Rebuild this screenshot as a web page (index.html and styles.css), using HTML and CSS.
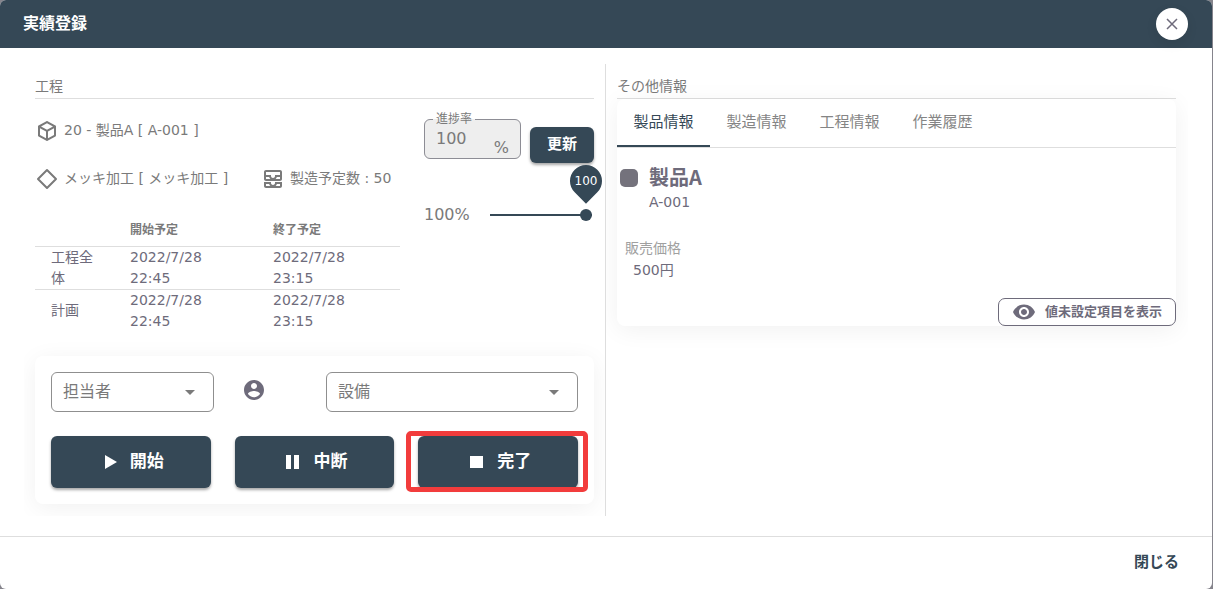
FILE: index.html
```html
<!DOCTYPE html>
<html lang="ja">
<head>
<meta charset="utf-8">
<meta name="viewport" content="width=device-width, initial-scale=1">
<title>実績登録</title>
<link rel="stylesheet" href="styles.css">
</head>
<body>
<div class="dialog" role="dialog" aria-labelledby="dialog-title">
  <header class="dialog-header">
    <h1 class="dialog-title" id="dialog-title">実績登録</h1>
    <button class="close-button" type="button" aria-label="閉じる">
      <svg width="16" height="16" viewBox="0 0 16 16" fill="none" stroke="currentColor" stroke-width="1.500"><path d="M3 3l10 10M13 3L3 13"/></svg>
    </button>
  </header>

  <main class="dialog-body">
    <section class="column column-process">
      <h2 class="section-title">工程</h2>
      <div class="process">
        <div class="process-info">
          <div class="info-row">
            <div class="info-item">
              <svg class="icon" viewBox="0 0 24 24"><path d="M21 16.500c0 .380-.210.710-.530.880l-7.900 4.440c-.160.120-.360.180-.570.180s-.410-.060-.570-.180l-7.900-4.440A.991.991 0 0 1 3 16.500v-9c0-.380.210-.710.530-.880l7.900-4.440c.160-.120.360-.180.570-.180s.410.060.570.180l7.900 4.440c.320.170.530.500.530.880v9M12 4.150 6.040 7.500 12 10.850l5.960-3.350L12 4.150M5 15.910l6 3.380v-6.710L5 9.210v6.700m14 0v-6.700l-6 3.370v6.710l6-3.380z"/></svg>
              <span>20 - 製品A [ A-001 ]</span>
            </div>
          </div>
          <div class="info-row">
            <div class="info-item">
              <svg class="icon" viewBox="0 0 24 24"><path fill="none" stroke="currentColor" stroke-width="2" stroke-linejoin="round" d="M12 3l9 9-9 9-9-9z"/></svg>
              <span>メッキ加工 [ メッキ加工 ]</span>
            </div>
            <div class="info-item">
              <svg class="icon" viewBox="0 0 24 24"><path d="M19 3H5c-1.100 0-2 .9-2 2v7c0 1.100.9 2 2 2h14c1.100 0 2-.9 2-2V5c0-1.100-.9-2-2-2zM5 10h3.130c.210.780.670 1.470 1.270 2H5v-2zm14 2h-4.400c.6-.530 1.060-1.220 1.270-2H19v2zm0-4h-5v1c0 1.070-.930 2-2 2s-2-.930-2-2V8H5V5h14v3zm-5 7v1c0 .470-.190.9-.480 1.250-.370.450-.920.750-1.520.750s-1.150-.3-1.520-.750c-.290-.350-.480-.780-.480-1.250v-1H3v4c0 1.100.9 2 2 2h14c1.100 0 2-.9 2-2v-4h-7zm-9 2h3.130c.020.090.060.170.090.250.240.680.650 1.280 1.180 1.750H5v-2zm14 2h-4.400c.540-.470.950-1.070 1.180-1.750.030-.080.070-.160.090-.250H19v2z"/></svg>
              <span>製造予定数 : 50</span>
            </div>
          </div>
          <table class="schedule">
            <thead>
              <tr><th scope="col" aria-label="区分"></th><th scope="col">開始予定</th><th scope="col">終了予定</th></tr>
            </thead>
            <tbody>
              <tr><td>工程全体</td><td>2022/7/28 22:45</td><td>2022/7/28 23:15</td></tr>
              <tr><td>計画</td><td>2022/7/28 22:45</td><td>2022/7/28 23:15</td></tr>
            </tbody>
          </table>
        </div>

        <div class="progress">
          <div class="progress-form">
            <fieldset class="progress-field">
              <legend><label for="progress-value">進捗率</label></legend>
              <div class="progress-entry">
                <input class="progress-input" id="progress-value" type="text" value="100" disabled>
                <span class="progress-unit">%</span>
              </div>
            </fieldset>
            <button class="button button-update" type="button">更新</button>
          </div>
          <div class="slider">
            <label for="progress-slider">100%</label>
            <div class="slider-control">
              <input class="slider-input" id="progress-slider" type="range" min="0" max="100" value="100">
              <output class="slider-bubble" for="progress-slider"><span>100</span></output>
            </div>
          </div>
        </div>
      </div>

      <div class="card work-card">
        <div class="work-fields">
          <div class="select-box">
            <select class="select" aria-label="担当者"><option>担当者</option></select>
            <svg class="select-arrow" viewBox="0 0 24 24"><path d="M7 10l5 5 5-5z"/></svg>
          </div>
          <div class="account">
            <svg class="icon" viewBox="0 0 24 24"><path d="M12 2C6.480 2 2 6.480 2 12s4.480 10 10 10 10-4.480 10-10S17.520 2 12 2zm0 3c1.660 0 3 1.340 3 3s-1.340 3-3 3-3-1.340-3-3 1.340-3 3-3zm0 14.200c-2.500 0-4.710-1.280-6-3.220.030-1.990 4-3.080 6-3.080 1.990 0 5.970 1.090 6 3.080-1.290 1.940-3.500 3.220-6 3.220z"/></svg>
          </div>
          <div class="select-box">
            <select class="select" aria-label="設備"><option>設備</option></select>
            <svg class="select-arrow" viewBox="0 0 24 24"><path d="M7 10l5 5 5-5z"/></svg>
          </div>
        </div>
        <div class="work-actions">
          <button class="button button-work" type="button">
            <svg class="icon" viewBox="0 0 24 24"><path d="M7 5v14l12-7z"/></svg><span>開始</span>
          </button>
          <button class="button button-work" type="button">
            <svg class="icon" viewBox="0 0 24 24"><path d="M5 19h5V5H5v14zm8-14v14h5V5h-5z"/></svg><span>中断</span>
          </button>
          <div class="highlighted">
            <button class="button button-work" type="button">
              <svg class="icon" viewBox="0 0 24 24"><path d="M5 6h13v12H5z"/></svg><span>完了</span>
            </button>
          </div>
        </div>
      </div>
    </section>

    <section class="column column-info">
      <h2 class="section-title">その他情報</h2>
      <div class="card info-card">
        <div class="tabs" role="tablist">
          <button class="tab tab-active" type="button" role="tab" aria-selected="true">製品情報</button>
          <button class="tab" type="button" role="tab" aria-selected="false">製造情報</button>
          <button class="tab" type="button" role="tab" aria-selected="false">工程情報</button>
          <button class="tab" type="button" role="tab" aria-selected="false">作業履歴</button>
        </div>
        <div class="product">
          <span class="product-color"></span>
          <div>
            <h3 class="product-name">製品A</h3>
            <p class="product-code">A-001</p>
          </div>
        </div>
        <dl class="price">
          <dt>販売価格</dt>
          <dd>500円</dd>
        </dl>
        <div class="info-actions">
          <button class="button-outline" type="button">
            <svg class="icon" viewBox="0 0 24 24"><path d="M12 4.500C7 4.500 2.730 7.610 1 12c1.730 4.390 6 7.500 11 7.500s9.270-3.110 11-7.500c-1.730-4.390-6-7.500-11-7.500zM12 17c-2.760 0-5-2.240-5-5s2.240-5 5-5 5 2.240 5 5-2.240 5-5 5zm0-8c-1.660 0-3 1.340-3 3s1.340 3 3 3 3-1.340 3-3-1.340-3-3-3z"/></svg>
            <span>値未設定項目を表示</span>
          </button>
        </div>
      </div>
    </section>
  </main>

  <footer class="dialog-footer">
    <button class="button-text" type="button">閉じる</button>
  </footer>
</div>
</body>
</html>
```
FILE: styles.css
```css
:root {
  --primary: #354856;
  --text: #6e6b7b;
  --muted: #7a7a7a;
  --line: #dedede;
}

* {
  box-sizing: border-box;
}

body {
  margin: 0;
  background: #85848c;
  color: var(--text);
  font-family: "DejaVu Sans", "Noto Sans CJK JP", sans-serif;
  font-size: 14px;
  line-height: 21px;
}

h1, h2, h3, p, dl, dd, fieldset {
  margin: 0;
}

button, input, select {
  margin: 0;
  padding: 0;
  border: 0;
  background: none;
  color: inherit;
  font: inherit;
}

.icon {
  flex: none;
  width: 24px;
  height: 24px;
  fill: currentColor;
}

.dialog {
  display: flex;
  flex-direction: column;
  min-height: 100vh;
  margin-right: 1px;
  overflow: hidden;
  border-radius: 6px;
  background: #fff;
}

.dialog-header {
  display: flex;
  align-items: center;
  justify-content: space-between;
  padding: 8px 24px 8px 23px;
  background: var(--primary);
  color: #fff;
}

.dialog-title {
  font-size: 16px;
  line-height: 24px;
}

.close-button {
  display: grid;
  place-items: center;
  width: 32px;
  height: 32px;
  border-radius: 50%;
  background: #fff;
  box-shadow: 0 4px 12px rgba(0, 0, 0, 0.08);
  color: var(--text);
}

.dialog-body {
  display: grid;
  flex: 1;
  grid-template-columns: 1fr 1fr;
  padding: 16px 24px 20px;
}

.column {
  min-width: 0;
  overflow: hidden;
  padding: 12px 12px 0 11px;
}

.column-process {
  padding: 12px 11px 12px;
  border-right: 1px solid var(--line);
}

.section-title {
  padding-bottom: 2px;
  border-bottom: 1px solid var(--line);
  color: var(--muted);
  font-size: 14px;
  font-weight: 400;
  line-height: 20px;
}

.process {
  display: grid;
  grid-template-columns: 1fr 170px;
  column-gap: 24px;
  padding-top: 8px;
  color: var(--muted);
}

.info-row {
  display: grid;
  grid-template-columns: 226px 1fr;
  height: 48px;
}

.info-item {
  display: flex;
  align-items: center;
  gap: 5px;
  white-space: nowrap;
}

.info-item span {
  padding-bottom: 2px;
}

.schedule {
  width: 100%;
  margin-top: 10px;
  border-collapse: collapse;
  table-layout: fixed;
  color: var(--text);
}

.schedule th,
.schedule td {
  padding: 0 16px;
  text-align: left;
}

.schedule th {
  height: 33px;
  padding-top: 2px;
  color: var(--muted);
  font-size: 12px;
}

.schedule th:first-child {
  width: 79px;
}

.schedule td {
  border-top: 1px solid var(--line);
}

.progress-form {
  display: flex;
  align-items: flex-end;
  gap: 9px;
  padding-top: 6px;
}

.progress-field {
  flex: 1;
  min-width: 0;
  padding: 0 11px 0 8px;
  border: 1px solid #8d8d95;
  border-radius: 6px;
  background: #eee;
}

.progress-field legend {
  padding: 0 3px;
  font-size: 12px;
  line-height: 12px;
}

.progress-entry {
  display: flex;
  align-items: flex-start;
  height: 33px;
  padding-left: 3px;
  font-size: 16px;
}

.progress-input {
  flex: 1;
  width: 0;
  height: 26px;
}

.progress-unit {
  align-self: flex-end;
  line-height: 20px;
}

.button {
  border-radius: 6px;
  background: var(--primary);
  box-shadow: 0 2px 3px rgba(0, 0, 0, 0.35);
  color: #fff;
  font-weight: 700;
}

.button-update {
  width: 64px;
  height: 36px;
  margin-bottom: -4px;
  padding-bottom: 2px;
  font-size: 15px;
}

.slider {
  display: flex;
  align-items: center;
  gap: 20px;
  margin-top: 44px;
  padding-right: 2px;
  font-size: 16px;
  line-height: 24px;
}

.slider-control {
  position: relative;
  display: flex;
  flex: 1;
}

.slider-input {
  width: 100%;
  height: 12px;
  appearance: none;
}

.slider-input::-webkit-slider-runnable-track {
  height: 2px;
  background: var(--primary);
}

.slider-input::-webkit-slider-thumb {
  width: 12px;
  height: 12px;
  margin-top: -5px;
  border-radius: 50%;
  background: var(--primary);
  appearance: none;
}

.slider-bubble {
  position: absolute;
  right: -10px;
  bottom: 24px;
  display: grid;
  place-items: center;
  width: 32px;
  height: 32px;
  color: #fff;
  font-size: 12px;
}

.slider-bubble::before {
  position: absolute;
  inset: 0;
  border-radius: 50% 50% 50% 0;
  background: var(--primary);
  content: "";
  transform: rotate(-45deg);
}

.slider-bubble span {
  position: relative;
}

.card {
  border-radius: 8px;
  background: #fff;
  box-shadow: 0 4px 24px rgba(0, 0, 0, 0.06);
}

.work-card {
  margin-top: 24px;
  padding: 16px;
}

.work-fields {
  display: grid;
  grid-template-columns: 163fr 112fr 252fr;
}

.select-box {
  position: relative;
}

.select {
  width: 100%;
  height: 40px;
  padding: 0 36px 0 11px;
  border: 1px solid #8f8f8f;
  border-radius: 6px;
  color: var(--muted);
  font-size: 16px;
  appearance: none;
}

.select-arrow {
  position: absolute;
  top: 8px;
  right: 12px;
  width: 24px;
  height: 24px;
  fill: var(--muted);
  pointer-events: none;
}

.account {
  padding: 6px 0 0 28px;
}

.work-actions {
  display: grid;
  grid-template-columns: repeat(3, 1fr);
  gap: 24px;
  margin-top: 24px;
}

.button-work {
  display: flex;
  align-items: center;
  justify-content: center;
  gap: 8px;
  width: 100%;
  height: 52px;
  font-size: 17px;
}

.highlighted {
  position: relative;
}

.highlighted::after {
  position: absolute;
  inset: -5px -10px -4px -12px;
  border: 5px solid #f23c3c;
  border-radius: 5px;
  content: "";
  pointer-events: none;
}

.tabs {
  display: flex;
  border-bottom: 1px solid var(--line);
}

.tab {
  min-width: 93px;
  height: 48px;
  border-bottom: 2px solid transparent;
  color: #858585;
  font-size: 15px;
}

.tab-active {
  border-bottom-color: var(--primary);
  color: var(--primary);
}

.product {
  display: flex;
  gap: 11px;
  padding: 16px 3px 0;
}

.product-color {
  width: 18px;
  height: 18px;
  margin-top: 5px;
  border-radius: 5px;
  background: #74727c;
}

.product-name {
  font-family: "Noto Sans CJK JP", sans-serif;
  font-size: 20px;
  line-height: 26px;
}

.product-code {
  line-height: 24px;
}

.price {
  padding: 22px 8px 0;
}

.price dt {
  color: #a0a0a0;
  line-height: 24px;
}

.price dd {
  padding-left: 8px;
}

.info-actions {
  display: flex;
  justify-content: flex-end;
  padding-top: 17px;
}

.button-outline {
  display: flex;
  align-items: center;
  gap: 9px;
  height: 28px;
  padding: 0 13px;
  border: 1px solid var(--text);
  border-radius: 7px;
  font-size: 13px;
  font-weight: 700;
}

.button-outline span {
  padding-bottom: 2px;
}

.dialog-footer {
  display: flex;
  justify-content: flex-end;
  padding: 8px 25px;
  border-top: 1px solid var(--line);
}

.button-text {
  height: 36px;
  padding: 0 8px 2px;
  color: var(--primary);
  font-size: 15px;
  font-weight: 700;
}
```
